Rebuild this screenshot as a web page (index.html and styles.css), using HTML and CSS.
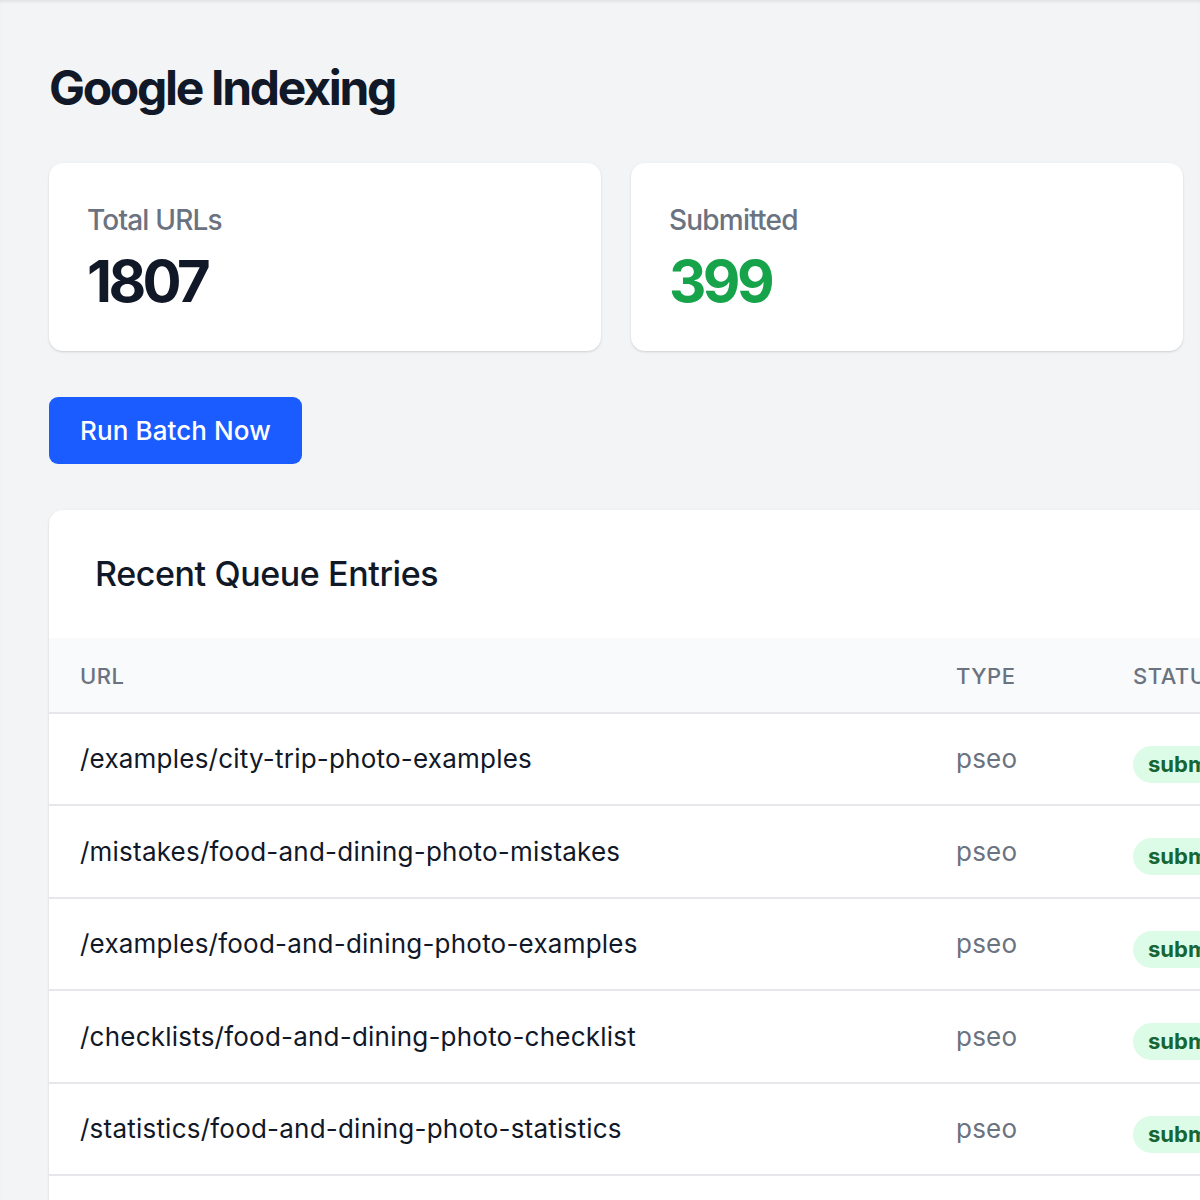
FILE: index.html
```html
<!DOCTYPE html>
<html lang="en">
<head>
<meta charset="utf-8">
<title>Google Indexing</title>
<link rel="stylesheet" href="styles.css">
</head>
<body>
<main class="page">
  <h1 class="title">Google Indexing</h1>
  <section class="stats">
    <div class="card stat">
      <div class="stat-label">Total URLs</div>
      <div class="stat-value">1807</div>
    </div>
    <div class="card stat">
      <div class="stat-label">Submitted</div>
      <div class="stat-value green">399</div>
    </div>
  </section>
  <button class="btn" type="button">Run Batch Now</button>
  <section class="card queue">
    <h2 class="queue-title">Recent Queue Entries</h2>
    <table class="table">
      <colgroup>
        <col class="c-url"><col class="c-type"><col class="c-status"><col class="c-date">
      </colgroup>
      <thead>
        <tr><th>URL</th><th>Type</th><th>Status</th><th>Submitted At</th></tr>
      </thead>
      <tbody>
        <tr><td>/examples/city-trip-photo-examples</td><td class="muted">pseo</td><td><span class="badge">submitted</span></td><td class="muted">2024-05-12</td></tr>
        <tr><td>/mistakes/food-and-dining-photo-mistakes</td><td class="muted">pseo</td><td><span class="badge">submitted</span></td><td class="muted">2024-05-12</td></tr>
        <tr><td>/examples/food-and-dining-photo-examples</td><td class="muted">pseo</td><td><span class="badge">submitted</span></td><td class="muted">2024-05-12</td></tr>
        <tr><td>/checklists/food-and-dining-photo-checklist</td><td class="muted">pseo</td><td><span class="badge">submitted</span></td><td class="muted">2024-05-12</td></tr>
        <tr><td>/statistics/food-and-dining-photo-statistics</td><td class="muted">pseo</td><td><span class="badge">submitted</span></td><td class="muted">2024-05-12</td></tr>
        <tr><td>/guides/food-and-dining-photo-guide</td><td class="muted">pseo</td><td><span class="badge">submitted</span></td><td class="muted">2024-05-12</td></tr>
      </tbody>
    </table>
  </section>
</main>
</body>
</html>
```
FILE: styles.css
```css
html, body {
  margin: 0;
  padding: 0;
  overflow: hidden;
}
body {
  background: #f3f4f6;
  font-family: Inter, "Noto Sans", "Liberation Sans", sans-serif;
  color: #111827;
}
.page {
  padding: 59px 17px 0 49px;
  min-height: 1200px;
  box-shadow: inset 0 3px 3px -1px rgba(0, 0, 0, 0.07);
}
.title {
  margin: 0 0 46px 0;
  font-size: 48px;
  line-height: 1.2;
  font-weight: 700;
  letter-spacing: -2.3px;
  color: #111827;
}
.stats {
  display: grid;
  grid-template-columns: 1fr 1fr;
  gap: 30px;
}
.card {
  background: #ffffff;
  border-radius: 14px;
  box-shadow: 0 1px 3px rgba(0, 0, 0, 0.1), 0 1px 2px rgba(0, 0, 0, 0.06);
}
.stat {
  padding: 38px 38px 34px;
}
.stat-label {
  font-size: 28px;
  line-height: 39px;
  font-weight: 500;
  letter-spacing: -0.8px;
  color: #6b7280;
}
.stat-value {
  margin-top: 5px;
  font-size: 58px;
  line-height: 72px;
  font-weight: 700;
  letter-spacing: -3.6px;
  color: #111827;
}
.stat-value.green {
  color: #16a34a;
}
.btn {
  display: block;
  margin-top: 46px;
  height: 67px;
  padding: 0 31px;
  border: 0;
  border-radius: 9px;
  background: #1a5cff;
  color: #ffffff;
  font-family: inherit;
  font-size: 26px;
  font-weight: 500;
  letter-spacing: 0.1px;
}
.queue {
  margin-top: 46px;
  width: 1400px;
  overflow: hidden;
}
.queue-title {
  margin: 0;
  padding: 42px 46px 42px;
  font-size: 34px;
  line-height: 44px;
  font-weight: 500;
  letter-spacing: -0.4px;
  color: #111827;
}
.table {
  width: 100%;
  border-collapse: collapse;
  table-layout: fixed;
}
.c-url { width: 876px; }
.c-type { width: 177px; }
.c-status { width: 250px; }
.table thead th {
  background: #f9fafb;
  text-align: left;
  padding: 22px 31px 19px;
  font-size: 22px;
  line-height: 33px;
  font-weight: 500;
  text-transform: uppercase;
  letter-spacing: 0.5px;
  color: #6b7280;
  border-bottom: 2px solid #e5e7eb;
  white-space: nowrap;
}
.table td {
  height: 90.5px;
  padding: 0 31px;
  vertical-align: middle;
  font-size: 26px;
  line-height: 39px;
  letter-spacing: 0.22px;
  color: #111827;
  border-bottom: 2px solid #e5e7eb;
  white-space: nowrap;
}
.table td.muted {
  color: #6b7280;
}
.badge {
  display: inline-block;
  padding: 0 15px;
  height: 37px;
  line-height: 37px;
  border-radius: 999px;
  background: #dcfce7;
  color: #166534;
  font-size: 22px;
  font-weight: 700;
  letter-spacing: 0;
  vertical-align: -8px;
}
```
